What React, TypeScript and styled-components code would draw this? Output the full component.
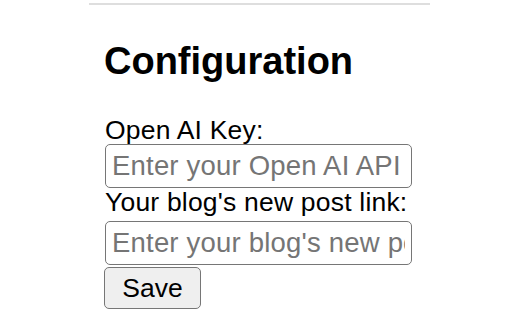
import React from "react";
import styled, { createGlobalStyle } from "styled-components";

const Global = createGlobalStyle`
  html, body { margin: 0; padding: 0; background: #ffffff; }
  body { font-family: "Liberation Sans", Arial, Helvetica, sans-serif; color: #000; }
`;

const Page = styled.div`
  width: 341px;
  margin-left: 89px;
  padding-top: 3px;
`;

const Rule = styled.div`
  height: 2px;
  background: #dedede;
`;

const Content = styled.div`
  display: flex;
  flex-direction: column;
  align-items: flex-start;
  padding-left: 16px;
`;

const Title = styled.h2`
  margin: 34px 0 33px -1px;
  font-size: 38px;
  line-height: 44px;
  font-weight: 700;
`;

const Label = styled.label`
  font-size: 26.5px;
  line-height: 28px;
  letter-spacing: 0.2px;
`;

const Field = styled.input<{ $top: number }>`
  box-sizing: border-box;
  width: 307px;
  height: 44px;
  margin: ${(p) => p.$top}px 0 0;
  padding: 0 6px;
  border: 1.5px solid #767676;
  border-radius: 5px;
  font-family: inherit;
  font-size: 27.5px;
  letter-spacing: 0.2px;
  color: #000;
  outline: none;
  &::placeholder { color: #757575; }
`;

const SaveButton = styled.button`
  box-sizing: border-box;
  width: 97px;
  height: 42px;
  margin: 2px 0 0 -1px;
  padding: 0;
  border: 1.5px solid #767676;
  border-radius: 5px;
  background: #efefef;
  font-family: inherit;
  font-size: 26.5px;
  color: #000;
`;

export default function App() {
  return (
    <>
      <Global />
      <Page>
        <Rule />
        <Content>
          <Title>Configuration</Title>
          <Label htmlFor="key">Open AI Key:</Label>
          <Field id="key" $top={0} placeholder="Enter your Open AI API key" />
          <Label htmlFor="link">Your blog's new post link:</Label>
          <Field id="link" $top={5} placeholder="Enter your blog's new post link" />
          <SaveButton>Save</SaveButton>
        </Content>
      </Page>
    </>
  );
}
